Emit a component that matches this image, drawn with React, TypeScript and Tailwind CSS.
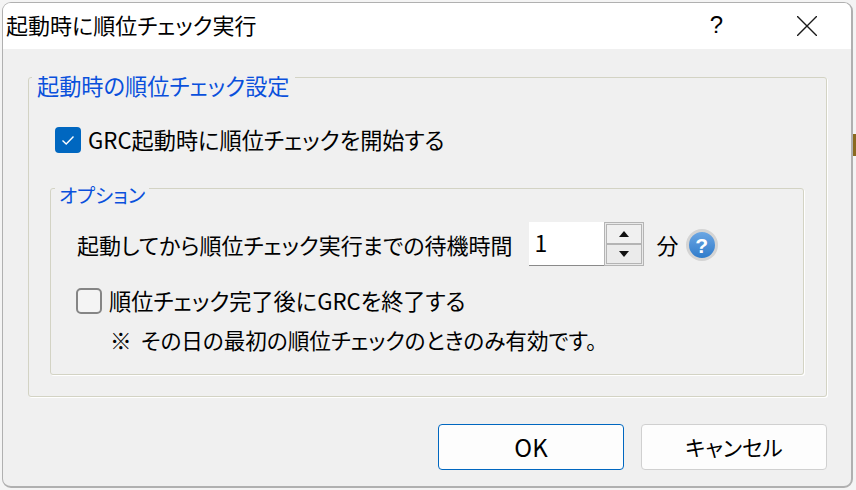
import React from 'react';

const font = "font-['Noto_Sans_CJK_JP','Liberation_Sans',sans-serif] [font-feature-settings:'palt']";

const CheckBox: React.FC<{ checked?: boolean }> = ({ checked }) =>
  checked ? (
    <span className="flex h-[26px] w-[26px] shrink-0 items-center justify-center rounded-[4px] bg-[#0067c0]">
      <svg width="16" height="16" viewBox="0 0 16 16" fill="none">
        <path d="M2.5 8.5 6.2 12 13.5 4.5" stroke="#fff" strokeWidth="1.4" />
      </svg>
    </span>
  ) : (
    <span className="h-[26px] w-[26px] shrink-0 rounded-[5px] border-2 border-[#858585] bg-[#f4f4f4]" />
  );

const App: React.FC = () => {
  return (
    <div className={`relative h-[490px] w-[856px] overflow-hidden bg-[#f4f4f4] pl-[2px] pt-[2px] text-black ${font}`}>
      {/* 背後のウィンドウの端 */}
      <div className="absolute right-0 top-[134px] h-[22px] w-[3px] bg-[#8a6a20]" />

      {/* ダイアログ本体 */}
      <div className="flex h-[486px] w-[851px] flex-col overflow-hidden rounded-[9px] border-b-[2px] border-r-[2px] border-t-[1px] border-l-[1px] border-[#b0b0b0] bg-[#f0f0f0]">
        {/* タイトルバー */}
        <div className="flex h-[46px] shrink-0 items-center bg-white pb-[4px] pl-[3px]">
          <span className="text-[22px] leading-none">起動時に順位チェック実行</span>
          <span className="ml-auto mr-[74px] mt-[2px] text-[24px] leading-none font-['Liberation_Sans',sans-serif]">?</span>
          <svg className="mr-[34px] mt-[4px]" width="20" height="20" viewBox="0 0 20 20" fill="none">
            <path d="M0 0 20 20M20 0 0 20" stroke="#1a1a1a" strokeWidth="1.4" />
          </svg>
        </div>

        {/* 本文 */}
        <div className="flex flex-1 flex-col pl-[25px] pr-[24px] pt-[28px]">
          <div className="relative h-[320px] rounded-[3px] border border-[#d3d3c4] pl-[21px] pr-[22px] pt-[47px] shadow-[1px_1px_0_#fff]">
            <span className="absolute -top-[5px] left-[3px] bg-[#f0f0f0] px-[5px] text-[22.2px] leading-[24px] text-[#0a50dc]">
              起動時の順位チェック設定
            </span>
            <label className="flex h-[30px] items-center gap-[7px] pl-[5px] text-[22.2px]">
              <CheckBox checked />
              <span>GRC起動時に順位チェックを開始する</span>
            </label>

            <div className="relative mt-[33px] h-[187px] rounded-[3px] border border-[#d3d3c4] shadow-[1px_1px_0_#fff]">
              <span className="absolute -top-[6px] left-[4px] bg-[#f0f0f0] px-[4px] text-[19.6px] leading-[24px] text-[#0a50dc]">
                オプション
              </span>
              <div className="flex pl-[26px] pt-[33px]">
                <span className="flex h-[44px] items-center text-[22px]">起動してから順位チェック実行までの待機時間</span>
                <div className="ml-[16px] flex h-[44px] w-[115px]">
                  <div className="flex h-full w-[75px] items-center border-b-[1.5px] border-[#8a8a8a] bg-white pb-[3px] pl-[6px] text-[23px]">
                    1
                  </div>
                  <div className="flex h-full w-[40px] flex-col border border-[#b4b4b4] bg-[#e9e9e9] p-[1px]">
                    <button className="flex flex-1 items-center justify-center border-x border-t border-[#b4b4b4] bg-[#f0f0f0]">
                      <svg width="10" height="6" viewBox="0 0 10 6"><path d="M5 0 10 6H0z" fill="#111" /></svg>
                    </button>
                    <div className="h-[2px] bg-[#b4b4b4]" />
                    <button className="flex flex-1 items-center justify-center border-x border-b border-[#b4b4b4] bg-[#ebebeb]">
                      <svg width="10" height="6" viewBox="0 0 10 6"><path d="M0 0H10L5 6z" fill="#111" /></svg>
                    </button>
                  </div>
                </div>
                <span className="ml-[13px] flex h-[44px] items-center text-[22px]">分</span>
                <span className="ml-[7px] mt-[7px] flex h-[32px] w-[32px] items-center justify-center rounded-full border-[3px] border-[#d4d4d4] bg-gradient-to-b from-[#6ba6e3] to-[#2f7ccb] text-[21px] leading-none font-bold text-white font-['Liberation_Sans',sans-serif]">
                  ?
                </span>
              </div>
              <label className="mt-[21px] flex h-[28px] items-center gap-[7px] pl-[25px] text-[22.2px]">
                <CheckBox />
                <span>順位チェック完了後にGRCを終了する</span>
              </label>
              <p className="flex pl-[59px] pt-[10px] text-[21.6px] leading-[30px]">
                <span className="w-[31px] shrink-0">※</span>
                <span>その日の最初の順位チェックのときのみ有効です。</span>
              </p>
            </div>
          </div>

          {/* ボタン */}
          <div className="mt-[27px] flex justify-end gap-[17px]">
            <button className="h-[46px] w-[186px] rounded-[4px] border-[1.5px] border-[#0067c0] bg-[#fdfdfd] text-[24px]">OK</button>
            <button className="h-[46px] w-[186px] rounded-[4px] border border-[#d0d0d0] bg-[#fdfdfd] text-[21.5px]">キャンセル</button>
          </div>
        </div>
      </div>
    </div>
  );
};

export default App;
